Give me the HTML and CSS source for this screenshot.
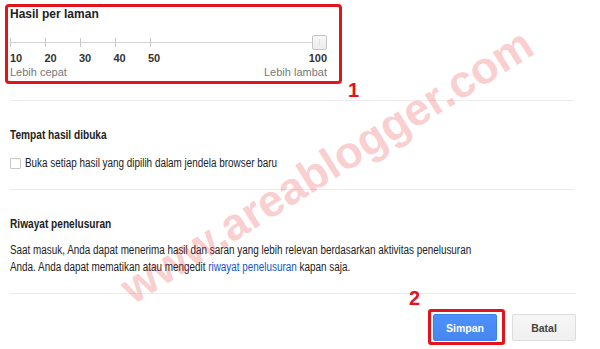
FILE: index.html
```html
<!DOCTYPE html>
<html lang="id">
<head>
<meta charset="utf-8">
<title>Setelan penelusuran</title>
<link rel="stylesheet" href="styles.css">
</head>
<body>
<div class="page">
  <section class="results-box">
    <h2 class="box-title">Hasil per laman</h2>
    <div class="slider">
      <span class="tick"></span>
      <span class="tick"></span>
      <span class="tick"></span>
      <span class="tick"></span>
      <span class="tick"></span>
      <span class="handle"></span>
    </div>
    <div class="scale">
      <span class="num">10</span>
      <span class="num">20</span>
      <span class="num">30</span>
      <span class="num">40</span>
      <span class="num">50</span>
      <span class="num num-end">100</span>
    </div>
    <div class="hints">
      <span>Lebih cepat</span>
      <span>Lebih lambat</span>
    </div>
  </section>
  <span class="marker marker-1">1</span>

  <section class="setting">
    <h2 class="setting-title">Tempat hasil dibuka</h2>
    <label class="check"><span class="check-box"></span><span class="check-text">Buka setiap hasil yang dipilih dalam jendela browser baru</span></label>
  </section>

  <section class="setting">
    <h2 class="setting-title">Riwayat penelusuran</h2>
    <p class="desc">Saat masuk, Anda dapat menerima hasil dan saran yang lebih relevan berdasarkan aktivitas penelusuran Anda. Anda dapat mematikan atau mengedit <a class="link" href="#">riwayat penelusuran</a> kapan saja.</p>
  </section>

  <div class="actions">
    <span class="highlight"><button class="btn btn-primary">Simpan</button></span>
    <button class="btn btn-secondary">Batal</button>
  </div>
  <span class="marker marker-2">2</span>

  <div class="watermark">www.areablogger.com</div>
</div>
</body>
</html>
```

FILE: styles.css
```css
* { box-sizing: border-box; }

body {
  margin: 0;
  background: #fff;
  font-family: "Liberation Sans", Arial, sans-serif;
  color: #222;
}

.page {
  position: relative;
  width: 600px;
  height: 349px;
  overflow: hidden;
  padding: 4px 26px 0 10px;
}

/* ---- results per page box ---- */
.results-box {
  width: 337px;
  margin-left: -5px;
  border: 3px solid #e3131b;
  border-radius: 4px;
  padding: 0 12px 2px 2px;
}

.box-title {
  margin: 0;
  font-size: 12px;
  line-height: 14px;
  font-weight: bold;
  color: #222;
}

.slider {
  margin-top: 14px;
  height: 15px;
  display: flex;
  align-items: center;
  background: linear-gradient(#d4d4d4, #d4d4d4) no-repeat 0 7px / 100% 1px;
}

.tick {
  flex: none;
  width: 35px;
  height: 9px;
  border-left: 1px solid #c8c8c8;
}

.handle {
  margin-left: auto;
  width: 15px;
  height: 15px;
  border: 1px solid #c4c4c4;
  border-radius: 2px;
  background:
    repeating-linear-gradient(90deg, transparent 0 3px, #e2e2e2 3px 4px) 3px 3px / 7px 7px no-repeat,
    linear-gradient(#f8f8f8, #ececec);
}

.scale {
  margin-top: 2px;
  display: flex;
  font-size: 11px;
  line-height: 13px;
  font-weight: bold;
  color: #333;
}

.num { width: 34.5px; }
.num-end { width: auto; margin-left: auto; }

.hints {
  margin-top: 1px;
  display: flex;
  justify-content: space-between;
  font-size: 11px;
  line-height: 13px;
  color: #777;
}

/* ---- annotation markers ---- */
.marker {
  position: absolute;
  color: #e3131b;
  font: bold 20px/20px "Liberation Sans", Arial, sans-serif;
}
.marker-1 { left: 348px; top: 80px; }
.marker-2 { left: 409px; top: 288px; }

/* ---- settings sections (condensed text as in the capture) ---- */
.setting {
  border-top: 1px solid #ebebeb;
  padding: 27px 0 17px;
}
.results-box + .marker + .setting { margin-top: 16px; }

.setting-title {
  margin: 0;
  font-size: 12.5px;
  line-height: 15px;
  font-weight: bold;
  color: #222;
  transform: scaleX(0.81);
  transform-origin: 0 0;
}

.check {
  display: flex;
  align-items: center;
  gap: 4px;
  margin-top: 12px;
  height: 17px;
  font-size: 12px;
  line-height: 17px;
  color: #222;
}

.check-box {
  flex: none;
  width: 11px;
  height: 11px;
  border: 1px solid #c6c6c6;
  border-radius: 1px;
  background: #fff;
}

.check-text {
  display: inline-block;
  white-space: nowrap;
  transform: scaleX(0.825);
  transform-origin: 0 0;
}

.desc {
  margin: 10px 0 0;
  width: 575px;
  font-size: 12px;
  line-height: 17px;
  color: #222;
  transform: scaleX(0.825);
  transform-origin: 0 0;
}

.link { color: #15c; text-decoration: none; }

/* ---- actions ---- */
.actions {
  border-top: 1px solid #ebebeb;
  padding-top: 15px;
  margin-right: -2px;
  display: flex;
  justify-content: flex-end;
  align-items: flex-start;
  gap: 7px;
}

.highlight {
  display: flex;
  border: 3px solid #e3131b;
  border-radius: 3px;
  padding: 2px 5px 1px 2px;
}

.btn {
  width: 64px;
  height: 27px;
  padding: 0;
  border: 1px solid #dcdcdc;
  border-radius: 2px;
  background: linear-gradient(#f6f6f6, #f0f0f0);
  color: #444;
  font: bold 10.5px "Liberation Sans", Arial, sans-serif;
}

.btn-primary {
  border-color: #3a82f0;
  background: linear-gradient(#4d90fe, #4787ed);
  color: #fff;
}

.btn-secondary { margin-top: 5px; }

/* ---- watermark ---- */
.watermark {
  position: absolute;
  left: 133px;
  top: 267px;
  transform: rotate(-32deg);
  transform-origin: 0 38px;
  font: bold 45px/45px "Liberation Sans", Arial, sans-serif;
  color: rgba(236, 40, 40, 0.24);
  white-space: nowrap;
  pointer-events: none;
}
```
